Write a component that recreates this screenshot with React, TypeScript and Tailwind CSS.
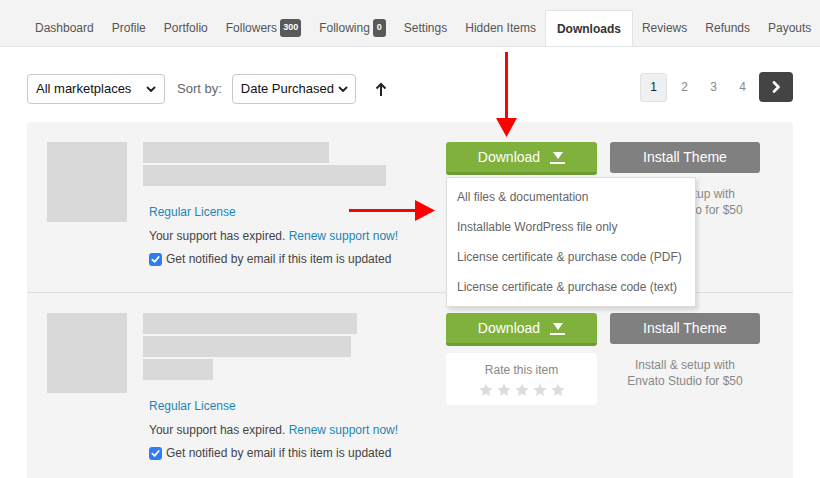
import React from "react";

const tabs = [
  { label: "Dashboard" },
  { label: "Profile" },
  { label: "Portfolio" },
  { label: "Followers", badge: "300" },
  { label: "Following", badge: "0" },
  { label: "Settings" },
  { label: "Hidden Items" },
  { label: "Downloads", active: true },
  { label: "Reviews" },
  { label: "Refunds" },
  { label: "Payouts" },
];

const menuItems = [
  "All files & documentation",
  "Installable WordPress file only",
  "License certificate & purchase code (PDF)",
  "License certificate & purchase code (text)",
];

function Chevron() {
  return (
    <svg width="10" height="7" viewBox="0 0 10 7" className="shrink-0">
      <path d="M1.5 1.5 5 5l3.5-3.5" fill="none" stroke="#222" strokeWidth="1.8" strokeLinecap="round" strokeLinejoin="round" />
    </svg>
  );
}

function Star() {
  return (
    <svg width="16" height="16" viewBox="0 0 24 24">
      <path d="M12 2.5l2.9 6.3 6.9.7-5.2 4.6 1.5 6.8L12 17.4l-6.1 3.5 1.5-6.8L2.2 9.5l6.9-.7z" fill="#dcdcdc" />
    </svg>
  );
}

function Row({ bars, last, open }: { bars: number[]; last?: boolean; open?: boolean }) {
  return (
    <div className={"flex px-[20px] pt-[20px] pb-[25px] " + (last ? "" : "border-b border-[#dedede]")}>
      <div className="w-[80px] h-[80px] bg-[#d9d9d9] shrink-0" />
      <div className="ml-[16px] w-[303px] shrink-0">
        <div className="flex flex-col gap-[2px]">
          {bars.map((w, i) => (
            <div key={i} className="h-[21px] bg-[#d9d9d9]" style={{ width: w }} />
          ))}
        </div>
        <div className="pl-[6px] mt-[18px] text-[12px] leading-[16px]">
          <div className="text-[#1b87b8]">Regular License</div>
          <div className="mt-[8px] text-[#444]">
            Your support has expired. <span className="text-[#1b87b8]">Renew support now!</span>
          </div>
          <div className="mt-[7px] flex items-center text-[#444]">
            <span className="w-[13px] h-[13px] rounded-[3px] bg-[#2f7cf6] flex items-center justify-center mr-[4px]">
              <svg width="9" height="9" viewBox="0 0 10 10">
                <path d="M1.5 5.2 4 7.6 8.6 2.2" fill="none" stroke="#fff" strokeWidth="1.9" strokeLinecap="round" strokeLinejoin="round" />
              </svg>
            </span>
            Get notified by email if this item is updated
          </div>
        </div>
      </div>
      <div className="relative w-[151px] shrink-0">
        <div className="h-[33px] bg-[#80b13c] border-b-[3px] border-[#6e9b33] rounded-[3px] flex items-center justify-center pt-[1px] text-white text-[14px]">
          <span>Download</span>
          <span className="ml-[10px] flex flex-col items-center">
            <svg width="12" height="9" viewBox="0 0 12 9">
              <path d="M1 1h10L6 8z" fill="#fff" />
            </svg>
            <span className="w-[15px] h-[2px] bg-white mt-[2px]" />
          </span>
        </div>
        <div className="mt-[7px] h-[52px] bg-white rounded-[4px] flex flex-col items-center pt-[9px]">
          <div className="text-[12px] leading-[16px] text-[#888]">Rate this item</div>
          <div className="flex gap-[2px] mt-[4px]">
            <Star />
            <Star />
            <Star />
            <Star />
            <Star />
          </div>
        </div>
        {open && (
          <div className="absolute left-0 top-[35px] w-[250px] h-[130px] bg-white border border-[#dcdcdc] shadow-[2px_3px_4px_rgba(0,0,0,0.12)] pt-[4px] z-10">
            {menuItems.map((m) => (
              <div key={m} className="h-[30px] flex items-center px-[10px] text-[12px] text-[#666] whitespace-nowrap">
                {m}
              </div>
            ))}
          </div>
        )}
      </div>
      <div className="ml-[13px] w-[150px] shrink-0">
        <div className="h-[31px] bg-[#808080] rounded-[3px] flex items-center justify-center text-white text-[14px]">
          Install Theme
        </div>
        <div className="mt-[13px] text-center text-[12px] leading-[16px] text-[#888]">
          Install &amp; setup with
          <br />
          Envato Studio for $50
        </div>
      </div>
    </div>
  );
}

export default function App() {
  return (
    <div className="relative w-[820px] h-[478px] overflow-hidden bg-white font-['Liberation_Sans',Arial,sans-serif]">
      <nav className="h-[47px] bg-[#f3f3f3] border-b border-[#e1e4e6] flex items-end pl-[26px] overflow-hidden">
        {tabs.map((t) =>
          t.active ? (
            <div
              key={t.label}
              className="shrink-0 whitespace-nowrap h-[37px] -mb-px px-[11px] bg-white border border-b-0 border-[#dfe3e6] rounded-t-[2px] flex items-center text-[12px] font-bold text-[#333]"
            >
              {t.label}
            </div>
          ) : (
            <div key={t.label} className="shrink-0 whitespace-nowrap h-[36px] px-[9px] flex items-center text-[12px] text-[#555]">
              {t.label}
              {t.badge && (
                <span className="ml-[3px] h-[18px] min-w-[13px] px-[3px] rounded-[3px] bg-[#595959] text-white text-[9px] font-bold flex items-center justify-center">
                  {t.badge}
                </span>
              )}
            </div>
          )
        )}
      </nav>

      <div className="flex items-center justify-between px-[27px] pt-[27px]">
        <div className="flex items-center">
          <div className="w-[138px] h-[30px] border border-[#c9c9c9] rounded-[4px] flex items-center justify-between pl-[8px] pr-[8px] text-[13px] text-[#111]">
            All marketplaces
            <Chevron />
          </div>
          <span className="ml-[12px] text-[13px] text-[#666]">Sort by:</span>
          <div className="ml-[10px] w-[124px] h-[30px] border border-[#c9c9c9] rounded-[4px] flex items-center justify-between pl-[8px] pr-[7px] text-[13px] text-[#111]">
            Date Purchased
            <Chevron />
          </div>
          <svg className="ml-[19px]" width="12" height="15" viewBox="0 0 12 15">
            <path d="M6 14V2M1.5 6.5 6 2l4.5 4.5" fill="none" stroke="#222" strokeWidth="2" strokeLinejoin="miter" />
          </svg>
        </div>
        <div className="flex items-center -mt-[4px]">
          <div className="w-[27px] h-[29px] rounded-[3px] bg-[#eef0f2] border border-[#dfe3e6] flex items-center justify-center text-[12px] text-[#222]">
            1
          </div>
          <div className="ml-[3px] w-[29px] text-center text-[12px] text-[#888]">2</div>
          <div className="w-[29px] text-center text-[12px] text-[#888]">3</div>
          <div className="w-[29px] text-center text-[12px] text-[#888]">4</div>
          <div className="ml-[2px] w-[34px] h-[30px] rounded-[4px] bg-[#444] flex items-center justify-center">
            <svg width="9" height="12" viewBox="0 0 9 12">
              <path d="M2 1.5 6.5 6 2 10.5" fill="none" stroke="#fff" strokeWidth="2.6" strokeLinecap="round" strokeLinejoin="round" />
            </svg>
          </div>
        </div>
      </div>

      <div className="mx-[27px] mt-[18px] bg-[#f4f4f4] rounded-t-[3px]">
        <Row bars={[186, 243]} open />
        <Row bars={[214, 208, 70]} last />
      </div>

      {/* annotation arrows */}
      <div className="absolute left-[505px] top-[52px] w-[3px] h-[68px] bg-[#ff0000]" />
      <svg className="absolute left-[496px] top-[118px]" width="21" height="19" viewBox="0 0 21 19">
        <path d="M0 0h21L10.5 19z" fill="#ff0000" />
      </svg>
      <div className="absolute left-[349px] top-[209px] w-[68px] h-[3px] bg-[#ff0000]" />
      <svg className="absolute left-[415px] top-[200px]" width="20" height="21" viewBox="0 0 20 21">
        <path d="M0 0v21l20-10.5z" fill="#ff0000" />
      </svg>
    </div>
  );
}
